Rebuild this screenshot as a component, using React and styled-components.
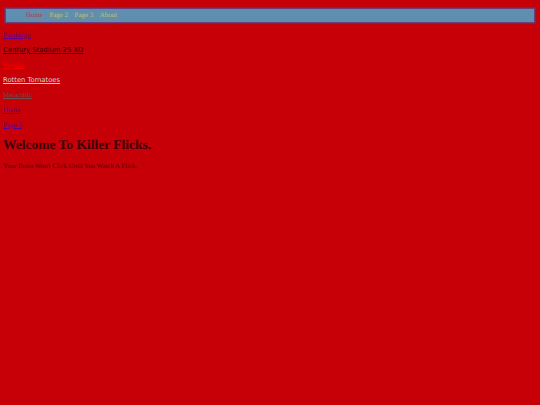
import React from "react";
import styled, { createGlobalStyle } from "styled-components";

const Global = createGlobalStyle`
  html, body { margin: 0; padding: 0; background: #c60006; }
  body {
    font-family: "Liberation Serif", "Times New Roman", serif;
    text-rendering: geometricPrecision;
  }
  #root { min-height: 405px; }
`;

const Page = styled.div`
  width: 540px;
  height: 405px;
  overflow: hidden;
  background: #c60006;
  padding: 9px 3px 0;
  box-sizing: border-box;
`;

const Nav = styled.nav`
  display: flex;
  align-items: center;
  gap: 6.6px;
  height: 13px;
  margin: 0 3px;
  padding: 0 0 0 20px;
  background: #5f8eaf;
  box-shadow: 0 0 0 1px #6c3f78, 0 0 1px 2px #8f1c50;
  font-size: 6.9px;
`;

const NavItem = styled.a`
  color: ${(p) => (p.$active ? "#c8303f" : "#c9c060")};
  white-space: nowrap;
`;

const Links = styled.div`
  margin-top: 5px;
  display: flex;
  flex-direction: column;
`;

const LinkRow = styled.p`
  margin: 0;
  height: 15px;
  display: flex;
  align-items: center;
`;

const TextLink = styled.a`
  color: ${(p) => p.$color};
  font-size: ${(p) => (p.$sans ? "6.8px" : "7px")};
  font-family: ${(p) =>
    p.$sans ? '"DejaVu Sans", Verdana, sans-serif' : "inherit"};
  text-decoration: underline;
  white-space: nowrap;
`;

const Title = styled.h1`
  margin: 4px 0 0;
  font-size: 13.5px;
  line-height: 17px;
  font-weight: bold;
  color: #3a0006;
`;

const Tagline = styled.p`
  margin: 9px 0 0;
  font-size: 6.8px;
  line-height: 9px;
  color: #4d0006;
`;

const navItems = ["Home", "Page 2", "Page 3", "About"];

const links = [
  { text: "Fandango", color: "#5a0090" },
  { text: "Century Stadium 25 XD", color: "#2e0006", sans: true },
  { text: "Esquire", color: "#f00000" },
  { text: "Rotten Tomatoes", color: "#cfd4dc", sans: true },
  { text: "Metacritic", color: "#6a5050" },
  { text: "Home", color: "#5a0090" },
  { text: "Page 2", color: "#5a0090" },
];

export default function App() {
  return (
    <>
      <Global />
      <Page>
        <Nav>
          {navItems.map((item, i) => (
            <NavItem key={item} $active={i === 0}>
              {item}
            </NavItem>
          ))}
        </Nav>
        <Links>
          {links.map((l) => (
            <LinkRow key={l.text}>
              <TextLink $color={l.color} $sans={l.sans}>
                {l.text}
              </TextLink>
            </LinkRow>
          ))}
        </Links>
        <Title>Welcome To Killer Flicks.</Title>
        <Tagline>Your Brain Won't Click Until You Watch A Flick.</Tagline>
      </Page>
    </>
  );
}
